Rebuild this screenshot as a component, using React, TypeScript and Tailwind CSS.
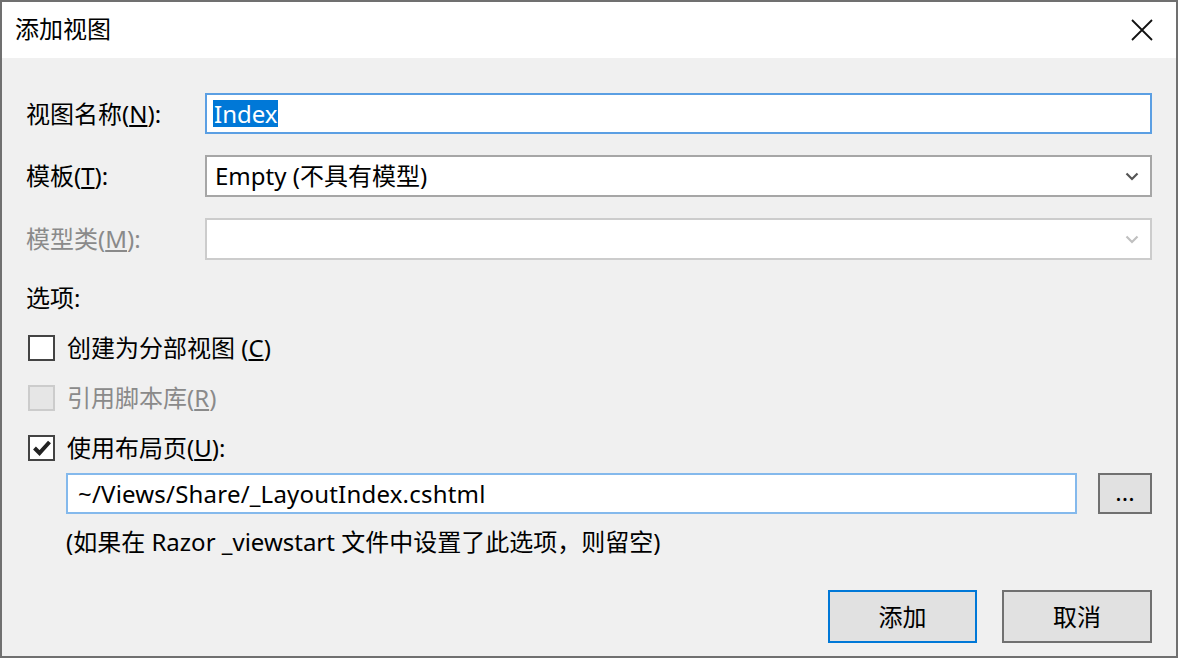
import React from "react";

const font = { fontFamily: '"Noto Sans", "Noto Sans CJK SC", sans-serif' };

function Chevron({ color }: { color: string }) {
  return (
    <svg width="14" height="9" viewBox="0 0 14 9" className="shrink-0">
      <path d="M1.5 1.5 L7 7 L12.5 1.5" fill="none" stroke={color} strokeWidth="2.2" />
    </svg>
  );
}

function Checkbox({ checked, disabled }: { checked?: boolean; disabled?: boolean }) {
  return (
    <div
      className={
        "w-[27px] h-[26px] border-2 flex items-center justify-center shrink-0 " +
        (disabled ? "border-[#cccccc] bg-[#e6e6e6]" : "border-[#444444] bg-white")
      }
    >
      {checked && (
        <svg width="20" height="18" viewBox="0 0 20 18">
          <path d="M2.5 9 L7.5 14 L17.5 3" fill="none" stroke="#222" strokeWidth="4" />
        </svg>
      )}
    </div>
  );
}

export default function App() {
  return (
    <div
      className="w-[1178px] h-[658px] border-2 border-[#707070] bg-[#f0f0f0] flex flex-col text-[24px] text-black"
      style={font}
    >
      {/* title bar */}
      <div className="h-[56px] bg-white flex items-center justify-between pl-[13px] pr-[23px] shrink-0">
        <span className="leading-none pb-[2px]">添加视图</span>
        <svg width="22" height="22" viewBox="0 0 22 22">
          <path d="M1 1 L21 21 M21 1 L1 21" stroke="#111" strokeWidth="1.8" />
        </svg>
      </div>

      <div className="flex-1 flex flex-col pl-[24px] pr-[24px]">
        <div className="flex items-center mt-[35px] h-[41px]">
          <div className="w-[179px] shrink-0">
            视图名称(<span className="underline underline-offset-2">N</span>):
          </div>
          <div className="flex-1 h-[41px] border-2 border-[#5b9fe3] bg-white flex items-center pl-[6px]">
            <span className="bg-[#0078d7] text-white leading-[27px] px-[1px]">Index</span>
          </div>
        </div>

        <div className="flex items-center mt-[21px] h-[42px]">
          <div className="w-[179px] shrink-0">
            模板(<span className="underline underline-offset-2">T</span>):
          </div>
          <div className="flex-1 h-[42px] border-2 border-[#a6a6a6] bg-white flex items-center justify-between pl-[8px] pr-[11px]">
            <span>Empty (不具有模型)</span>
            <Chevron color="#555555" />
          </div>
        </div>

        <div className="flex items-center mt-[21px] h-[42px]">
          <div className="w-[179px] shrink-0 text-[#8a8a8a]">
            模型类(<span className="underline underline-offset-2">M</span>):
          </div>
          <div className="flex-1 h-[42px] border-2 border-[#cccccc] bg-white flex items-center justify-end pr-[11px]">
            <Chevron color="#c0c0c0" />
          </div>
        </div>

        <div className="flex items-center mt-[13px] h-[50px]">选项:</div>

        <div className="flex items-center h-[50px] pl-[2px] gap-[12px]">
          <Checkbox />
          <span>
            创建为分部视图 (<span className="underline underline-offset-2">C</span>)
          </span>
        </div>

        <div className="flex items-center h-[50px] pl-[2px] gap-[12px] text-[#8a8a8a]">
          <Checkbox disabled />
          <span>
            引用脚本库(<span className="underline underline-offset-2">R</span>)
          </span>
        </div>

        <div className="flex items-center h-[50px] pl-[2px] gap-[12px]">
          <Checkbox checked />
          <span>
            使用布局页(<span className="underline underline-offset-2">U</span>):
          </span>
        </div>

        <div className="flex items-center h-[41px] pl-[40px] gap-[21px]">
          <div className="flex-1 h-[41px] border-2 border-[#84b9ec] bg-white flex items-center pl-[10px] tracking-[0.2px]">
            ~/Views/Share/_LayoutIndex.cshtml
          </div>
          <div className="w-[54px] h-[41px] border-2 border-[#707070] bg-[#e1e1e1] flex items-center justify-center leading-none pb-[4px]">
            ...
          </div>
        </div>

        <div className="flex items-center h-[28px] mt-[14px] pl-[40px]">
          (如果在 Razor _viewstart 文件中设置了此选项，则留空)
        </div>

        <div className="flex justify-end gap-[25px] mt-[34px]">
          <div className="w-[149px] h-[53px] border-2 border-[#0078d7] bg-[#e1e1e1] flex items-center justify-center">
            添加
          </div>
          <div className="w-[150px] h-[53px] border-2 border-[#707070] bg-[#e1e1e1] flex items-center justify-center">
            取消
          </div>
        </div>
      </div>
    </div>
  );
}
